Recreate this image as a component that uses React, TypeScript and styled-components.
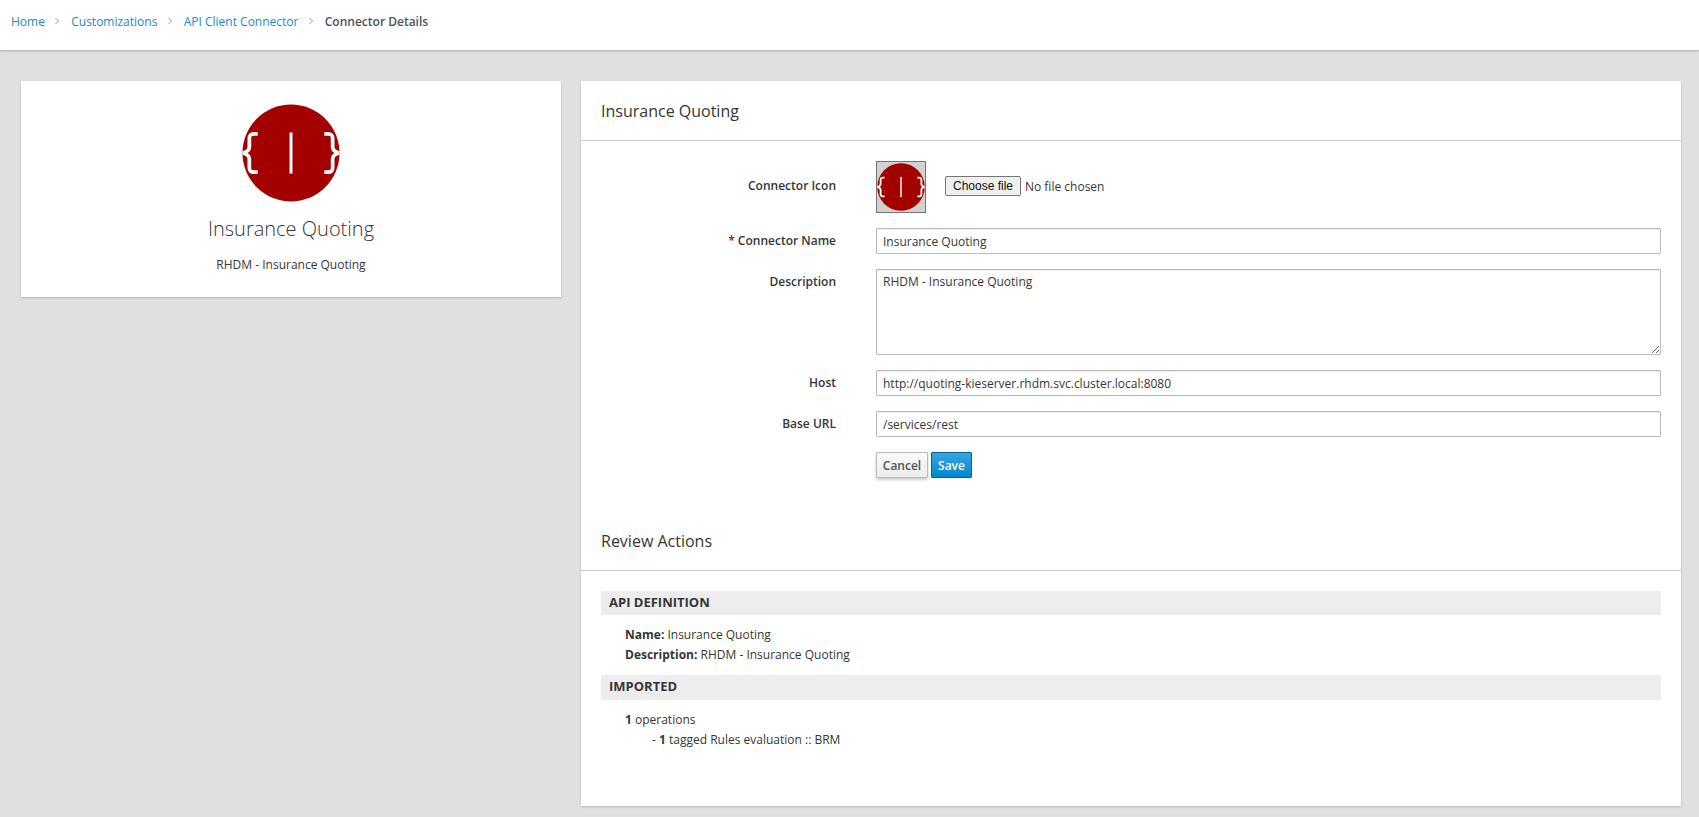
import styled, { createGlobalStyle } from 'styled-components';

const GlobalStyle = createGlobalStyle`
  html, body {
    margin: 0;
    padding: 0;
    background: #e0e0e0;
  }
  body {
    font-family: 'Open Sans', 'Liberation Sans', sans-serif;
    font-size: 12px;
    color: #363636;
  }
  * {
    box-sizing: border-box;
  }
`;

const crumbs = ['Home', 'Customizations', 'API Client Connector'];

const ConnectorLogo = ({ size }: { size: number }) => (
  <svg width={size} height={size} viewBox="0 0 100 100" aria-hidden="true">
    <circle cx="50" cy="50" r="49.5" fill="#a30000" />
    <path
      d="M16 30.5 H12.5 C8.5 30.5 7.5 32 7.5 35.5 V44 C7.5 47 5 49 1 50 C5 51 7.5 53 7.5 56 V65 C7.5 68.5 9 69.5 12.5 69.5 H16"
      fill="none"
      stroke="#fff"
      strokeWidth="3.8"
    />
    <path
      d="M84 30.5 H87.5 C91.5 30.5 92.5 32 92.5 35.5 V44 C92.5 47 95 49 99 50 C95 51 92.5 53 92.5 56 V65 C92.5 68.5 91 69.5 87.5 69.5 H84"
      fill="none"
      stroke="#fff"
      strokeWidth="3.8"
    />
    <rect x="48.5" y="29" width="3" height="42" fill="#fff" />
  </svg>
);

const App = () => {
  return (
    <>
      <GlobalStyle />
      <Header>
        <Breadcrumb>
          {crumbs.map(crumb => (
            <Crumb key={crumb}>
              <CrumbLink href="#">{crumb}</CrumbLink>
              <Chevron viewBox="0 0 6 8">
                <path d="M1.5 1 L4.5 4 L1.5 7" />
              </Chevron>
            </Crumb>
          ))}
          <CurrentCrumb>Connector Details</CurrentCrumb>
        </Breadcrumb>
      </Header>
      <Main>
        <SummaryCard>
          <ConnectorLogo size={98} />
          <SummaryTitle>Insurance Quoting</SummaryTitle>
          <SummaryText>RHDM - Insurance Quoting</SummaryText>
        </SummaryCard>
        <DetailCard>
          <SectionHeader>
            <SectionTitle>Insurance Quoting</SectionTitle>
          </SectionHeader>
          <Form>
            <IconRow>
              <IconLabel>Connector Icon</IconLabel>
              <IconField>
                <IconPreview>
                  <ConnectorLogo size={48} />
                </IconPreview>
                <FileControl>
                  <ChooseFileBtn type="button">Choose file</ChooseFileBtn>
                  <NoFileText>No file chosen</NoFileText>
                </FileControl>
              </IconField>
            </IconRow>
            <Row>
              <Label>
                <Required>*</Required> Connector Name
              </Label>
              <TextInput defaultValue="Insurance Quoting" />
            </Row>
            <Row>
              <Label>Description</Label>
              <Textarea defaultValue="RHDM - Insurance Quoting" />
            </Row>
            <Row>
              <Label>Host</Label>
              <TextInput defaultValue="http://quoting-kieserver.rhdm.svc.cluster.local:8080" />
            </Row>
            <Row>
              <Label>Base URL</Label>
              <TextInput defaultValue="/services/rest" />
            </Row>
            <Row>
              <span />
              <Actions>
                <CancelBtn type="button">Cancel</CancelBtn>
                <SaveBtn type="button">Save</SaveBtn>
              </Actions>
            </Row>
          </Form>
          <SectionHeader>
            <SectionTitle>Review Actions</SectionTitle>
          </SectionHeader>
          <Review>
            <ReviewBar>API DEFINITION</ReviewBar>
            <ReviewBody>
              <div>
                <b>Name:</b> Insurance Quoting
              </div>
              <div>
                <b>Description:</b> RHDM - Insurance Quoting
              </div>
            </ReviewBody>
            <ReviewBar $tall>IMPORTED</ReviewBar>
            <ReviewBody>
              <div>
                <b>1</b> operations
              </div>
              <TagLine>
                - <b>1</b> tagged Rules evaluation :: BRM
              </TagLine>
            </ReviewBody>
          </Review>
        </DetailCard>
      </Main>
    </>
  );
};

export default App;

const Header = styled.header`
  height: 50px;
  background: #fff;
  box-shadow: 0 1px 2px rgba(3, 3, 3, 0.25);
  padding: 11px 11px 0;
  position: relative;
`;

const Breadcrumb = styled.nav`
  display: flex;
  align-items: center;
  height: 20px;
`;

const Crumb = styled.span`
  display: flex;
  align-items: center;
`;

const CrumbLink = styled.a`
  color: #1a8ac9;
  text-decoration: none;
`;

const Chevron = styled.svg`
  width: 6px;
  height: 8px;
  margin: 0 11px 0 9.3px;

  path {
    fill: none;
    stroke: #9c9c9c;
    stroke-width: 1;
  }
`;

const CurrentCrumb = styled.span`
  font-weight: 600;
  color: #4d5258;
`;

const Main = styled.main`
  display: grid;
  grid-template-columns: 540px 1100px;
  column-gap: 20px;
  align-items: start;
  padding: 31px 18px 11px 21px;
`;

const SummaryCard = styled.section`
  height: 216px;
  background: #fff;
  box-shadow: 0 1px 2px rgba(3, 3, 3, 0.2);
  padding-top: 23px;
  display: flex;
  flex-direction: column;
  align-items: center;
`;

const SummaryTitle = styled.h2`
  margin: 13px 0 0;
  font-size: 20px;
  line-height: 27px;
  font-weight: 300;
  color: #363636;
`;

const SummaryText = styled.p`
  margin: 13px 0 0;
  line-height: 20px;
`;

const DetailCard = styled.section`
  height: 725px;
  background: #fff;
  box-shadow: 0 1px 2px rgba(3, 3, 3, 0.2);
`;

const SectionHeader = styled.div`
  height: 60px;
  padding: 0 20px;
  display: flex;
  align-items: center;
  border-bottom: 1px solid #d1d1d1;
`;

const SectionTitle = styled.h3`
  margin: 0;
  font-size: 16px;
  font-weight: 400;
  color: #363636;
`;

const Form = styled.form`
  display: flex;
  flex-direction: column;
  gap: 15px;
  padding: 20px 20px 33px 0;
`;

const Row = styled.div`
  display: grid;
  grid-template-columns: 255px 785px;
  column-gap: 40px;
`;

const IconRow = styled(Row)`
  align-items: center;
`;

const Label = styled.label`
  font-weight: 600;
  text-align: right;
  line-height: 26px;
`;

const IconLabel = styled(Label)`
  padding-bottom: 2px;
`;

const Required = styled.span`
  color: #a30000;
`;

const IconField = styled.div`
  display: flex;
  align-items: center;
  gap: 19px;
`;

const IconPreview = styled.div`
  width: 50px;
  height: 52px;
  background: #d1d1d1;
  border: 1px solid #72767b;
  display: flex;
  align-items: center;
  justify-content: center;
`;

const FileControl = styled.div`
  display: flex;
  align-items: center;
  gap: 4px;
  padding-bottom: 2px;
`;

const ChooseFileBtn = styled.button`
  width: 76px;
  height: 20px;
  padding: 0;
  font-family: 'Liberation Sans', Arial, sans-serif;
  font-size: 12px;
  color: #111;
  background: #efefef;
  border: 1px solid #767676;
  border-radius: 2px;
`;

const NoFileText = styled.span`
  color: #363636;
`;

const TextInput = styled.input`
  height: 26px;
  width: 100%;
  padding: 2px 6px;
  border: 1px solid #bbb;
  border-radius: 1px;
  box-shadow: inset 0 1px 1px rgba(3, 3, 3, 0.075);
  font: inherit;
  color: #363636;
`;

const Textarea = styled.textarea`
  height: 86px;
  width: 100%;
  padding: 2px 6px;
  border: 1px solid #bbb;
  border-radius: 1px;
  box-shadow: inset 0 1px 1px rgba(3, 3, 3, 0.075);
  font: inherit;
  line-height: 20px;
  color: #363636;
  display: block;
`;

const Actions = styled.div`
  display: flex;
  gap: 3px;
`;

const CancelBtn = styled.button`
  height: 26px;
  width: 52px;
  padding: 0;
  font: inherit;
  font-weight: 600;
  color: #4d5258;
  background: linear-gradient(to bottom, #fafafa, #ededed);
  border: 1px solid #bbb;
  border-radius: 1px;
  box-shadow: 0 2px 3px rgba(3, 3, 3, 0.2);
`;

const SaveBtn = styled.button`
  height: 26px;
  width: 41px;
  padding: 0;
  font: inherit;
  font-weight: 600;
  color: #fff;
  background: linear-gradient(to bottom, #39a5dc, #0088ce);
  border: 1px solid #00659c;
  border-radius: 1px;
`;

const Review = styled.div`
  padding: 20px 20px 0;
`;

const ReviewBar = styled.div<{ $tall?: boolean }>`
  height: ${({ $tall }) => ($tall ? '25px' : '24px')};
  line-height: 23px;
  padding: 0 8px;
  background: #ededed;
  font-size: 13px;
  font-weight: 700;
  color: #363636;
`;

const ReviewBody = styled.div`
  padding: 10px 24px;
  line-height: 20px;

  b {
    font-weight: 700;
  }
`;

const TagLine = styled.div`
  padding-left: 27px;
`;
